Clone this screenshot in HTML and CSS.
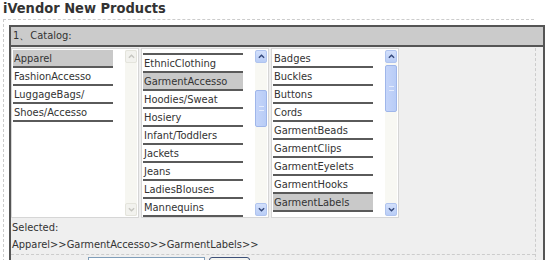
FILE: index.html
```html
<!DOCTYPE html>
<html lang="en">
<head>
    <meta charset="UTF-8">
    <title>iVendor New Products</title>
    <link rel="stylesheet" href="styles.css">
</head>
<body>
    <h1 class="title">iVendor New Products</h1>

    <div class="outer">
        <div class="frame">
            <div class="frame-head">1、Catalog:</div>
            <div class="frame-body">
                <div class="panel">
                    <div class="lists">
                        <!-- level 1 -->
                        <div class="listbox">
                            <ul class="items">
                                <li class="sel">Apparel</li>
                                <li>FashionAccesso</li>
                                <li>LuggageBags/</li>
                                <li>Shoes/Accesso</li>
                            </ul>
                            <div class="scroll off">
                                <span class="sbtn"><svg viewBox="0 0 8 5"><path d="M1 4 L4 1 L7 4"/></svg></span>
                                <span class="fill"></span>
                                <span class="sbtn"><svg viewBox="0 0 8 5"><path d="M1 1 L4 4 L7 1"/></svg></span>
                            </div>
                        </div>

                        <!-- level 2 -->
                        <div class="listbox">
                            <ul class="items scrolled">
                                <li>Dresses</li>
                                <li>EthnicClothing</li>
                                <li class="sel">GarmentAccesso</li>
                                <li>Hoodies/Sweat</li>
                                <li>Hosiery</li>
                                <li>Infant/Toddlers</li>
                                <li>Jackets</li>
                                <li>Jeans</li>
                                <li>LadiesBlouses</li>
                                <li>Mannequins</li>
                            </ul>
                            <div class="scroll">
                                <span class="sbtn"><svg viewBox="0 0 8 5"><path d="M1 4 L4 1 L7 4"/></svg></span>
                                <span class="thumb thumb-mid"><i></i></span>
                                <span class="fill"></span>
                                <span class="sbtn"><svg viewBox="0 0 8 5"><path d="M1 1 L4 4 L7 1"/></svg></span>
                            </div>
                        </div>

                        <!-- level 3 -->
                        <div class="listbox">
                            <ul class="items">
                                <li>Badges</li>
                                <li>Buckles</li>
                                <li>Buttons</li>
                                <li>Cords</li>
                                <li>GarmentBeads</li>
                                <li>GarmentClips</li>
                                <li>GarmentEyelets</li>
                                <li>GarmentHooks</li>
                                <li class="sel">GarmentLabels</li>
                            </ul>
                            <div class="scroll">
                                <span class="sbtn"><svg viewBox="0 0 8 5"><path d="M1 4 L4 1 L7 4"/></svg></span>
                                <span class="thumb thumb-top"><i></i></span>
                                <span class="fill"></span>
                                <span class="sbtn"><svg viewBox="0 0 8 5"><path d="M1 1 L4 4 L7 1"/></svg></span>
                            </div>
                        </div>
                    </div>

                    <div class="selected">Selected:</div>
                    <div class="path">Apparel&gt;&gt;GarmentAccesso&gt;&gt;GarmentLabels&gt;&gt;</div>

                    <div class="form-row">
                        <input type="text" class="text-in">
                        <button class="go">&nbsp;</button>
                    </div>
                </div>
            </div>
        </div>
    </div>
</body>
</html>
```

FILE: styles.css
```css
* {
    box-sizing: border-box;
    margin: 0;
    padding: 0;
}

body {
    background: #fff;
    font-family: "DejaVu Sans Condensed", "DejaVu Sans", sans-serif;
    font-size: 11px;
    color: #333;
    overflow: hidden;
}

.title {
    height: 19px;
    padding-left: 3px;
    font-size: 14.5px;
    line-height: 17px;
    font-weight: bold;
    color: #333;
}

.outer {
    margin-left: 3px;
    width: 531px;
    border-top: 1px dashed #ccc;
    border-left: 1px dashed #ccc;
    padding: 5px 0 0 5px;
}

.frame {
    width: 536px;
    border: 2px solid #555;
    border-bottom: none;
}

.frame-head {
    height: 20px;
    background: #cbcbcb;
    border-bottom: 2px solid #555;
    padding-left: 2px;
    line-height: 18px;
}

.frame-body {
    background: #efefef;
    padding-top: 1px;
}

.panel {
    width: 525px;
    border-right: 1px dashed #ccc;
}

.lists {
    display: flex;
    gap: 2px;
}

.listbox {
    width: 128px;
    height: 170px;
    display: flex;
    background: #fff;
    border: 1px solid #d6d6d6;
    padding: 1px;
    overflow: hidden;
}

.items {
    list-style: none;
    width: 100px;
    margin-right: 12px;
}

.items.scrolled {
    margin-top: -13px;
}

.items li {
    height: 18px;
    line-height: 17px;
    padding-left: 1px;
    border-bottom: 2px solid #5a5a5a;
    white-space: nowrap;
    overflow: hidden;
}

.items li.sel {
    background: #c9c9c9;
}

.scroll {
    width: 12px;
    display: flex;
    flex-direction: column;
    background: #f8f8f3;
}

.fill {
    flex: 1;
}

.sbtn {
    height: 13px;
    display: flex;
    align-items: center;
    justify-content: center;
    background: linear-gradient(#d3e0fb, #b9cdf6);
    border: 1px solid #b0c4ef;
    border-radius: 2px;
}

.sbtn svg {
    width: 7px;
    height: 5px;
    fill: none;
    stroke: #33477a;
    stroke-width: 1.6;
}

.scroll.off {
    background: #f6f6f1;
}

.scroll.off .sbtn {
    background: #f2f2ee;
    border-color: #e4e4dc;
}

.scroll.off .sbtn svg {
    stroke: #c6c6c0;
}

.thumb {
    display: flex;
    align-items: center;
    justify-content: center;
    background: linear-gradient(90deg, #c5d5fa, #b8ccf6);
    border: 1px solid #9fb6ea;
    border-radius: 2px;
}

.thumb i {
    width: 5px;
    height: 5px;
    border-top: 1px solid #e4ecfd;
    border-bottom: 1px solid #e4ecfd;
}

.thumb-mid {
    margin-top: 27px;
    height: 37px;
}

.thumb-top {
    margin-top: 2px;
    height: 47px;
}

.selected,
.path {
    height: 17px;
    line-height: 17px;
    padding-left: 1px;
}

.selected {
    margin-top: 1px;
}

.form-row {
    margin-top: 1px;
    border-top: 1px dashed #ccc;
    padding: 2px 0 0 77px;
    display: flex;
    gap: 4px;
}

.text-in {
    width: 117px;
    height: 20px;
    border: 1px solid #7f9db9;
    background: #fff;
}

.go {
    width: 41px;
    height: 20px;
    border: 1px solid #3c5078;
    border-radius: 3px;
    background: #f4f4f0;
}
```
